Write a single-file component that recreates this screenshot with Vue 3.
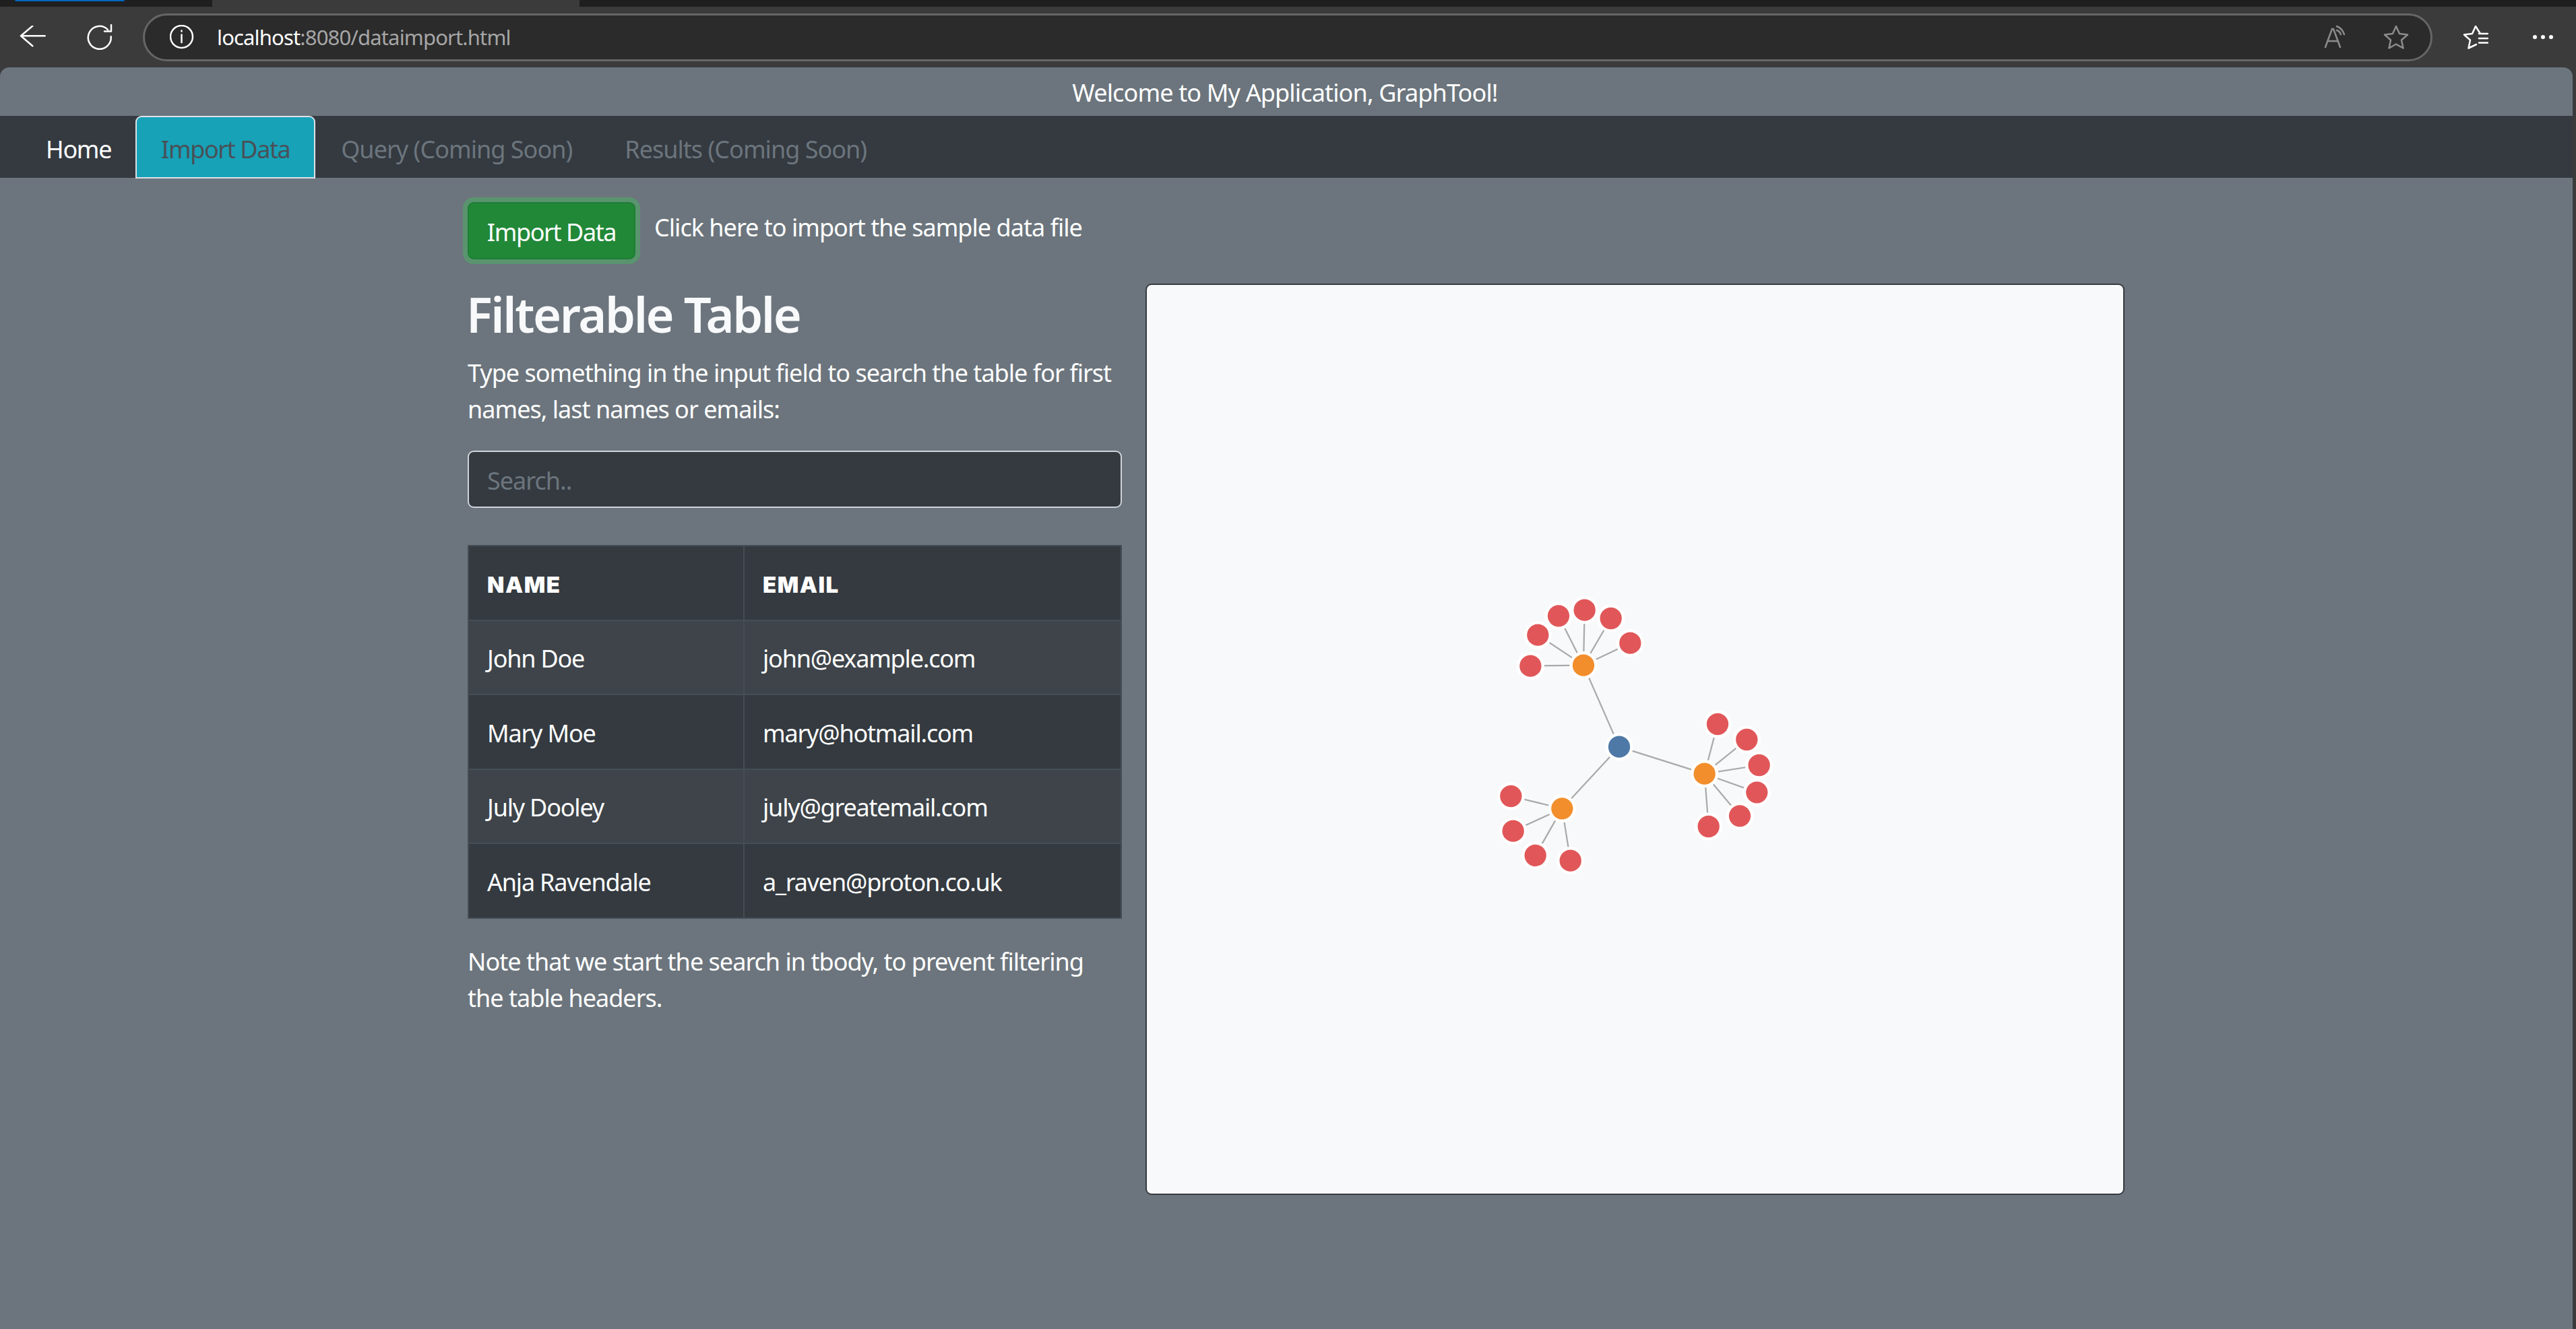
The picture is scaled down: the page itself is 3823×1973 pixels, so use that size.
<template>
  <div class="window">
    <div class="tabstrip">
      <div class="pinned"><span class="pinned-mark"></span></div>
      <div class="tab-current"></div>
    </div>
    <div class="toolbar">
      <svg class="tool back" viewBox="0 0 40 34"><path d="M19.300 .5 2 15.200l17.300 15M2 15.200h35.700" /></svg>
      <svg class="tool reload" viewBox="0 0 38 38"><path d="M35.700 18.300A17 17 0 1 1 31 8M36 1v9.500H26" /></svg>
      <div class="address">
        <svg class="tool info" viewBox="0 0 36 36"><circle cx="17.500" cy="17.500" r="16.500" /><path d="M17.500 14.500v11.500M17.500 8.500v1" /></svg>
        <span class="url"><b>localhost</b>:8080/dataimport.html</span>
        <span class="spring"></span>
        <svg class="tool read" viewBox="0 0 36 36"><path d="M2 33 12 6h2l10 27M6 24h14M19 2c5 2 9 6 11 12M19 8c3 1 5 3 6 6" /></svg>
        <svg class="tool star" viewBox="0 0 38 36"><path d="M19 2l5 11 12 1.500-9 8 2.500 12L19 28.500 8.500 34.500 11 22.500l-9-8L14 13z" /></svg>
      </div>
      <svg class="tool favs" viewBox="0 0 38 36"><path d="M26 13 19 2l-5 11-12 1.500 9 8L8.500 34.500 20 29M24 13h13M24 20h13M24 26.500h13" /></svg>
      <div class="dots"><i></i><i></i><i></i></div>
    </div>

    <div class="page">
      <div class="welcome">Welcome to My Application, GraphTool!</div>
      <nav class="nav">
        <a v-for="t in tabs" :key="t.label" class="nav-link" :class="t.cls">{{ t.label }}</a>
      </nav>

      <main class="content">
        <div class="import-row">
          <button class="btn-import">Import Data</button>
          <span class="import-hint">Click here to import the sample data file</span>
        </div>

        <div class="columns">
          <section class="left">
            <h2>Filterable Table</h2>
            <p class="intro">Type something in the input field to search the table for first names, last names or emails:</p>
            <input class="search" type="text" v-model="query" placeholder="Search.." />
            <table>
              <thead>
                <tr><th class="c1">Name</th><th>Email</th></tr>
              </thead>
              <tbody>
                <tr v-for="r in rows" :key="r.email">
                  <td>{{ r.name }}</td>
                  <td>{{ r.email }}</td>
                </tr>
              </tbody>
            </table>
            <p class="note">Note that we start the search in tbody, to prevent filtering the table headers.</p>
          </section>

          <section class="graph">
            <svg viewBox="0 0 1449 1349">
              <line v-for="(l, i) in links" :key="i" :x1="l.x1" :y1="l.y1" :x2="l.x2" :y2="l.y2" class="link" />
              <circle v-for="(n, i) in nodes" :key="i" :cx="n.x" :cy="n.y" r="18.400" :fill="n.color" class="node" />
            </svg>
          </section>
        </div>
      </main>
    </div>
  </div>
</template>

<script setup>
import { ref } from 'vue'

const query = ref('')

const tabs = [
  { label: 'Home', cls: 'home' },
  { label: 'Import Data', cls: 'active' },
  { label: 'Query (Coming Soon)', cls: 'muted' },
  { label: 'Results (Coming Soon)', cls: 'muted' },
]

const rows = [
  { name: 'John Doe', email: 'john@example.com' },
  { name: 'Mary Moe', email: 'mary@hotmail.com' },
  { name: 'July Dooley', email: 'july@greatemail.com' },
  { name: 'Anja Ravendale', email: 'a_raven@proton.co.uk' },
]

// measured positions of the force layout, root -> groups -> leaves
const pt = (x, y) => ({ x: 498 + x / 3, y: 437 + y / 3 })
const root = pt(609, 746)
const groups = [
  { at: pt(450, 383), leaves: [[214, 386], [247, 248], [339, 163], [455, 137], [572, 174], [658, 284]] },
  { at: pt(989, 866), leaves: [[1047, 645], [1177, 714], [1232, 828], [1222, 949], [1146, 1054], [1007, 1101]] },
  { at: pt(355, 1021), leaves: [[127, 966], [137, 1121], [236, 1230], [392, 1253]] },
]

const links = []
const nodes = [{ ...root, color: '#4e79a7' }]
for (const g of groups) {
  links.push({ x1: root.x, y1: root.y, x2: g.at.x, y2: g.at.y })
  nodes.push({ ...g.at, color: '#f28e2c' })
  for (const [x, y] of g.leaves) {
    const p = pt(x, y)
    links.push({ x1: g.at.x, y1: g.at.y, x2: p.x, y2: p.y })
    nodes.push({ ...p, color: '#e15759' })
  }
}
</script>

<style>
html, body { margin: 0; background: #3b3b3b; }
</style>

<style scoped>
.window { width: 3823px; height: 1973px; display: flex; flex-direction: column; overflow: hidden; background: #3b3b3b; font-family: "Noto Sans", "Open Sans", sans-serif; letter-spacing: -.98px; }
.tabstrip { height: 10px; background: #1f1f1f; display: flex; flex-shrink: 0; }
.pinned { width: 315px; padding-left: 22px; box-sizing: border-box; }
.pinned-mark { display: block; width: 163px; height: 2px; background: #0067c0; border-radius: 0 0 4px 4px; }
.tab-current { width: 545px; background: #3b3b3b; }

.toolbar { height: 90px; display: flex; align-items: center; flex-shrink: 0; box-sizing: border-box; }
.tool { fill: none; stroke: #fff; stroke-width: 2.500; stroke-linecap: round; stroke-linejoin: round; flex-shrink: 0; }
.back { width: 40px; height: 34px; margin-left: 29px; }
.reload { width: 38px; height: 38px; margin-left: 60px; }
.address { width: 3398px; height: 71px; margin-left: 45px; box-sizing: border-box; border: 3px solid #666; border-radius: 36px; background: #2b2b2b; display: flex; align-items: center; padding-left: 37px; }
.info { width: 36px; height: 36px; }
.url { font-size: 31px; letter-spacing: -.85px; color: #a6a6a6; margin-left: 34px; }
.url b { color: #fff; font-weight: 400; }
.spring { flex: 1; }
.read { width: 36px; height: 36px; stroke: #8c8c8c; }
.star { width: 38px; height: 36px; stroke: #8c8c8c; margin-left: 52px; margin-right: 32px; }
.favs { width: 38px; height: 36px; margin-left: 45px; }
.dots { display: flex; gap: 6px; margin-left: 66px; }
.dots i { width: 6px; height: 6px; border-radius: 50%; background: #fff; }

.page { width: 3818px; flex: 1; background: #6c757d; border-radius: 14px 14px 0 0; color: #fff; font-size: 36px; line-height: 54px; overflow: hidden; }
.welcome { height: 72px; line-height: 76px; text-align: center; letter-spacing: -.85px; padding-right: 4px; }
.nav { height: 92px; background: #343a40; display: flex; padding-left: 33px; box-sizing: border-box; }
.nav-link { height: 93px; box-sizing: border-box; padding: 0 33px; line-height: 95px; border: 2.250px solid transparent; border-radius: 9px 9px 0 0; white-space: nowrap; }
.home { color: #fff; padding-right: 34px; letter-spacing: -1.300px; }
.active { background: #17a2b8; color: #495057; border-color: #dee2e6; width: 267px; padding: 0; text-align: center; letter-spacing: -1.400px; }
.muted { color: #6c757d; padding: 0 38px 0 36px; }

.content { padding: 36px 0 0 694px; }
.import-row { display: flex; align-items: center; gap: 28px; }
.btn-import { width: 249px; height: 85px; box-sizing: border-box; background: #218838; color: #fff; border: 2.250px solid #1e7e34; border-radius: 9px; box-shadow: 0 0 0 7px rgba(72, 180, 97, .5); font: inherit; letter-spacing: -1.400px; padding: 5px 0 0; }
.import-hint { margin-top: -10px; }
.columns { display: flex; gap: 35px; margin-top: 36px; align-items: flex-start; }
.left { width: 971px; flex-shrink: 0; }
h2 { margin: 0 0 16px -2px; font-size: 72px; line-height: 90px; font-weight: 600; color: #f8f9fa; letter-spacing: -2.400px; }
.intro { margin: 0 0 34px; }
.search { display: block; width: 100%; height: 85px; box-sizing: border-box; background: #343a40; border: 2.250px solid #ced4da; border-radius: 9px; padding: 4px 27px 0; color: #fff; font: inherit; letter-spacing: inherit; outline: none; }
.search::placeholder { color: #6c757d; opacity: 1; }
table { width: 971px; margin-top: 55px; border-collapse: collapse; table-layout: fixed; background: #343a40; color: #fff; }
th, td { height: 110.500px; box-sizing: border-box; padding: 5px 27px 0; border: 2.250px solid #454d55; text-align: left; font-weight: 400; letter-spacing: -1.200px; }
.c1 { width: 409px; }
th { font-family: Inter, "Noto Sans", sans-serif; font-weight: 900; font-size: 33px; letter-spacing: 1.500px; text-transform: uppercase; }
tbody tr:nth-child(odd) { background: #3e444a; }
.note { margin: 37px 0 0; }
.graph { width: 1453px; height: 1353px; box-sizing: border-box; flex-shrink: 0; background: #f8f9fa; border: 2px solid #343a40; border-radius: 9px; }
.graph svg { display: block; width: 100%; height: 100%; }
.link { stroke: #aaa; stroke-width: 2.250; }
.node { stroke: #fff; stroke-width: 4.500; }
</style>
